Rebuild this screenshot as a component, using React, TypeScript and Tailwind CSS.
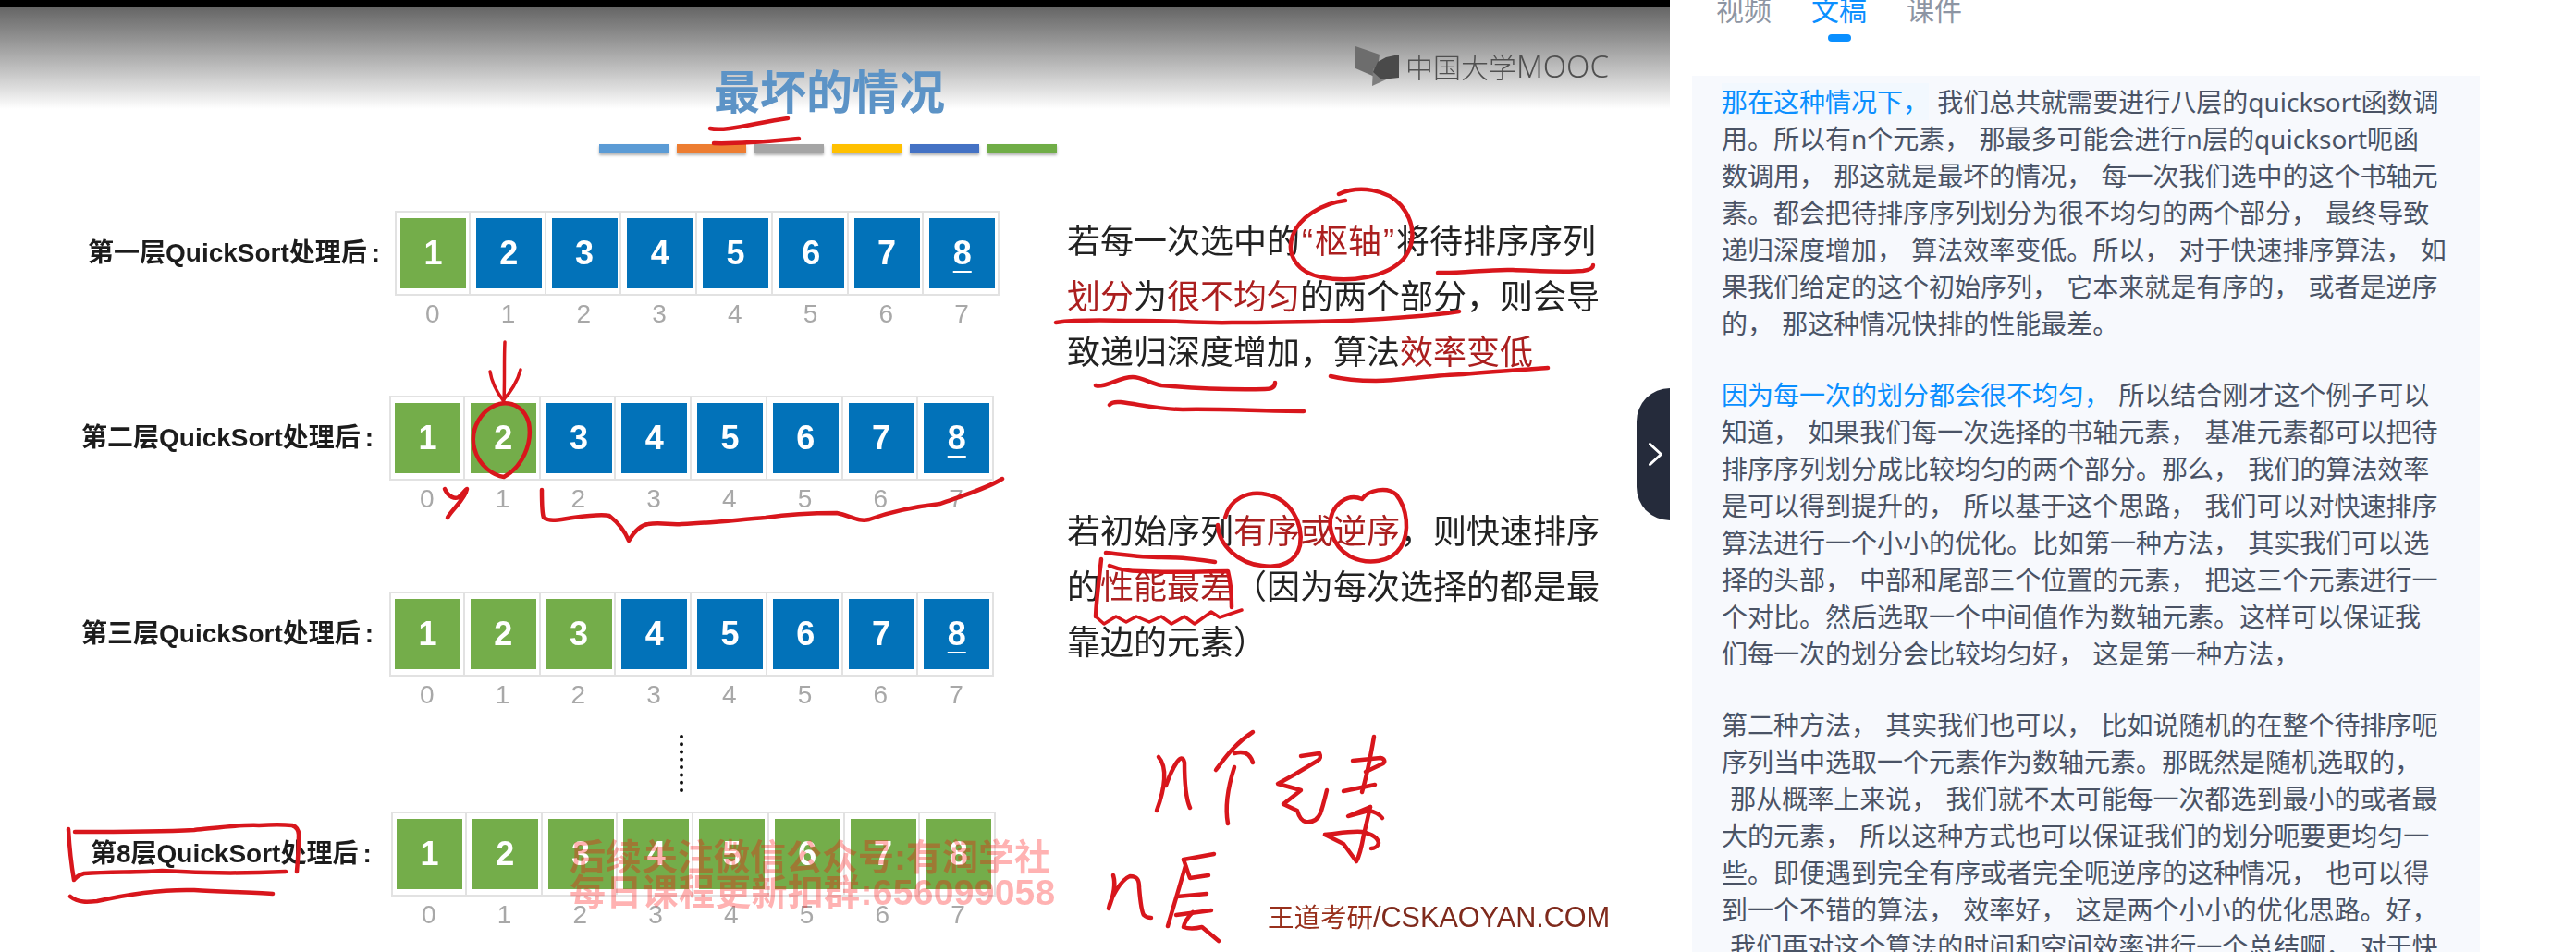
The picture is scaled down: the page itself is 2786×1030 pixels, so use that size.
import React from "react";

const COMMA = "\uFF0C";
const fw = (s: string) => s.replace(/,/g, COMMA);

const Cell = ({ n, green, mark }: { n: number; green: boolean; mark: boolean }) => (
  <div className="w-[81.75px] h-[92px] border-y-2 border-r-2 border-[#e2e2e2] pl-[6px] pr-[2.75px] py-[6px]">
    <div
      className={
        "h-full flex items-center justify-center text-white font-bold text-[36px] " +
        (green ? "bg-[#74ad4a]" : "bg-[#0272b9]")
      }
    >
      <span className={mark ? "underline decoration-2 underline-offset-[7px]" : ""}>{n}</span>
    </div>
  </div>
);

const Row = ({
  label,
  greens,
  rowClass,
  labelClass,
}: {
  label: string;
  greens: number;
  rowClass: string;
  labelClass: string;
}) => (
  <div className={"flex items-start " + rowClass}>
    <div className={"h-[92px] flex items-center text-[28px] font-bold text-[#1c1c1c] whitespace-nowrap " + labelClass}>
      {label}
      <span className="pl-[5px]">:</span>
    </div>
    <div className="w-[654px]">
      <div className="flex shadow-[inset_2px_0_0_#e2e2e2]">
        {[1, 2, 3, 4, 5, 6, 7, 8].map((n) => (
          <Cell key={n} n={n} green={n <= greens} mark={n === 8 && greens < 8} />
        ))}
      </div>
      <div className="flex h-[40px] text-[28px] leading-[40px] text-[#a8a8a8]">
        {[0, 1, 2, 3, 4, 5, 6, 7].map((n) => (
          <div key={n} className="w-[81.75px] text-center">
            {n}
          </div>
        ))}
      </div>
    </div>
  </div>
);

const Red = ({ children }: { children: React.ReactNode }) => <span className="text-[#ab1f1f]">{children}</span>;

const Ink = () => (
  <svg
    className="absolute inset-0 pointer-events-none"
    width="1806"
    height="1030"
    viewBox="0 0 1806 1030"
    fill="none"
    stroke="#d8161c"
    strokeWidth="4.5"
    strokeLinecap="round"
    strokeLinejoin="round"
  >
    {/* title */}
    <path d="M768 139C785 143 820 132 852 128" />
    <path d="M772 155C800 156 830 153 864 150" />
    {/* arrow and circle on 2 */}
    <path d="M546 370C545 390 546 415 545 433" strokeWidth="3.5" />
    <path d="M530 402C532 415 538 425 544 433C552 425 560 412 563 400" strokeWidth="3.5" />
    <path d="M545 436C520 440 508 465 513 485C518 505 535 515 545 516C565 505 576 480 572 458C568 442 555 434 540 437" />
    {/* y mark */}
    <path d="M481 529C485 538 492 540 496 538C500 535 503 530 505 529C503 540 490 550 484 560" />
    {/* brace */}
    <path d="M586 530C586 545 586 555 588 560C595 565 605 562 620 560C635 558 650 556 659 558C668 565 676 575 680 585C686 575 692 568 701 567C715 565 725 568 737 567C770 566 800 562 828 560C855 556 885 555 905 555C920 558 928 565 940 562C965 553 990 548 1017 545C1045 535 1068 528 1084 518" />
    {/* box around row 8 */}
    <path d="M74 897C75 915 77 935 80 952" />
    <path d="M81 900C120 900 170 900 210 898C240 895 262 892 280 893C295 892 306 892 316 893C322 895 323 900 323 903C323 920 322 932 321 943" />
    <path d="M81 951C84 947 87 946 91 945C120 943 150 944 175 942C220 945 265 945 309 943" />
    <path d="M76 970C85 977 95 976 105 975C140 967 175 962 210 963C240 965 270 965 295 967" />
    {/* para 1 */}
    <path d="M1455 217C1430 220 1405 235 1398 255C1391 275 1402 295 1430 300C1460 306 1500 300 1518 280C1532 262 1530 240 1515 222C1500 205 1470 200 1448 210" />
    <path d="M1555 295C1580 296 1610 291 1636 292C1665 293 1690 295 1712 293C1719 292 1723 290 1723 287" />
    <path d="M1142 349C1170 345 1200 347 1225 347C1260 346 1295 350 1332 349C1375 349 1420 348 1457 347C1500 345 1545 342 1578 337" />
    <path d="M1439 407C1455 411 1470 412 1488 412C1520 411 1550 406 1582 405C1615 402 1645 400 1674 398" />
    <path d="M1185 417C1195 420 1210 408 1225 408C1235 408 1245 415 1256 417C1290 420 1330 422 1368 421C1376 421 1379 418 1379 414" />
    <path d="M1200 438C1203 434 1208 435 1212 435C1235 438 1255 443 1279 443C1320 442 1365 445 1410 445" />
    {/* para 2 */}
    <path d="M1325 560C1330 540 1350 530 1370 535C1395 540 1410 565 1406 590C1402 608 1385 615 1365 612C1340 610 1318 590 1317 568" />
    <path d="M1473 540C1480 530 1500 526 1510 535C1522 550 1525 575 1515 592C1505 608 1480 612 1460 602C1440 590 1432 565 1445 548C1452 540 1462 535 1473 540" />
    <path d="M1196 598C1215 600 1235 603 1256 603C1275 603 1295 605 1314 608" />
    <path d="M1191 605C1189 625 1186 645 1185 667" />
    <path d="M1200 612C1210 616 1222 618 1234 618C1265 620 1300 618 1328 618C1331 630 1332 645 1332 657" />
    <path d="M1185 667L1194 675L1207 667L1218 673L1229 667L1243 673L1256 667L1267 675L1281 667L1292 675L1310 662L1319 668L1343 660" strokeWidth="3.5" />
    {/* n 个 元 素 */}
    <path d="M1253 819C1263 830 1260 853 1251 877" />
    <path d="M1261 850C1268 830 1278 812 1281 825C1281 845 1283 865 1287 874" />
    <path d="M1355 792C1335 805 1325 820 1315 833" />
    <path d="M1335 815C1345 812 1352 815 1355 825" />
    <path d="M1335 830C1327 855 1325 875 1328 891" />
    <path d="M1407 818L1427 815C1429 819 1428 821 1425 823L1400 838L1382 848L1400 853L1407 855L1388 870L1403 877C1405 884 1408 888 1412 889C1420 890 1425 887 1428 880C1431 872 1433 863 1435 855" />
    <path d="M1486 797C1482 820 1478 840 1473 857" />
    <path d="M1463 823L1493 820C1498 821 1498 824 1496 826L1477 835" />
    <path d="M1453 856L1487 849" />
    <path d="M1482 873L1458 883L1480 877C1486 878 1492 881 1495 885" />
    <path d="M1433 903C1445 902 1460 899 1473 900C1482 902 1490 905 1491 912C1490 916 1486 918 1483 918" />
    <path d="M1433 903L1453 913L1467 932C1471 925 1473 914 1475 903L1482 873" />
    {/* n 层 */}
    <path d="M1204 947C1208 960 1202 975 1199 983C1201 972 1212 952 1222 948C1230 948 1232 952 1232 960C1233 972 1234 985 1237 990C1239 992 1242 993 1245 993" />
    <path d="M1280 930L1313 924" />
    <path d="M1280 930C1283 938 1285 945 1287 950L1307 947" />
    <path d="M1282 937C1277 955 1268 985 1263 1002" />
    <path d="M1273 970L1305 967" />
    <path d="M1272 990L1310 985" />
    <path d="M1290 987C1285 992 1281 998 1280 1003C1288 1006 1296 1004 1300 1003L1318 1018" />
  </svg>
);

export default function App() {
  const stack = "font-['Liberation_Sans','Noto_Sans_CJK_SC',sans-serif]";
  const para1 = [
    "那在这种情况下,",
    " 我们总共就需要进行八层的quicksort函数调",
    "用。所以有n个元素, 那最多可能会进行n层的quicksort呃函",
    "数调用, 那这就是最坏的情况, 每一次我们选中的这个书轴元",
    "素。都会把待排序序列划分为很不均匀的两个部分, 最终导致",
    "递归深度增加, 算法效率变低。所以, 对于快速排序算法, 如",
    "果我们给定的这个初始序列, 它本来就是有序的, 或者是逆序",
    "的, 那这种情况快排的性能最差。",
  ].map(fw);
  const para2 = [
    " 所以结合刚才这个例子可以",
    "知道, 如果我们每一次选择的书轴元素, 基准元素都可以把待",
    "排序序列划分成比较均匀的两个部分。那么, 我们的算法效率",
    "是可以得到提升的, 所以基于这个思路, 我们可以对快速排序",
    "算法进行一个小小的优化。比如第一种方法, 其实我们可以选",
    "择的头部, 中部和尾部三个位置的元素, 把这三个元素进行一",
    "个对比。然后选取一个中间值作为数轴元素。这样可以保证我",
    "们每一次的划分会比较均匀好, 这是第一种方法,",
  ].map(fw);
  const para3 = [
    "第二种方法, 其实我们也可以, 比如说随机的在整个待排序呃",
    "序列当中选取一个元素作为数轴元素。那既然是随机选取的,",
    " 那从概率上来说, 我们就不太可能每一次都选到最小的或者最",
    "大的元素, 所以这种方式也可以保证我们的划分呃要更均匀一",
    "些。即便遇到完全有序或者完全呃逆序的这种情况, 也可以得",
    "到一个不错的算法, 效率好, 这是两个小小的优化思路。好,",
    " 我们再对这个算法的时间和空间效率进行一个总结啊, 对于快",
  ].map(fw);
  return (
    <div className={"flex w-[2786px] h-[1030px] overflow-hidden bg-white " + stack}>
      {/* video */}
      <div className="relative w-[1806px] h-full shrink-0 bg-white overflow-hidden">
        <div className="h-[8px] bg-black" />
        <div className="relative h-[1022px] blur-[0.6px]">
          <div className="absolute left-0 right-0 top-0 h-[110px] bg-gradient-to-b from-[#666666] to-white" />
          <div className="relative flex">
            {/* left column */}
            <div className="w-[1154px] shrink-0">
              <div className="mt-[63px] pl-[772px] h-[60px] text-[50px] leading-[60px] font-bold text-[#5c93c6] whitespace-nowrap">
                最坏的情况
              </div>
              <div className="mt-[25px] pl-[648px] flex gap-[9px]">
                {["bg-[#5b9bd5]", "bg-[#ed7d31]", "bg-[#a5a5a5]", "bg-[#ffc000]", "bg-[#4472c4]", "bg-[#70ad47]"].map((c) => (
                  <div key={c} className={"w-[75px] h-[10px] shadow-[0_2px_3px_rgba(0,0,0,0.3)] " + c} />
                ))}
              </div>
              <div className="mt-[62px]">
                <Row label="第一层QuickSort处理后" greens={1} rowClass="pl-[95px]" labelClass="w-[332px]" />
              </div>
              <div className="mt-[68px]">
                <Row label="第二层QuickSort处理后" greens={2} rowClass="pl-[88px]" labelClass="w-[333px]" />
              </div>
              <div className="mt-[80px]">
                <Row label="第三层QuickSort处理后" greens={3} rowClass="pl-[88px]" labelClass="w-[333px]" />
              </div>
              <div className="mt-[23px] ml-[735px] h-[62px] border-l-[4px] border-dotted border-[#111]" />
              <div className="mt-[21px]">
                <Row label="第8层QuickSort处理后" greens={8} rowClass="pl-[98px]" labelClass="w-[325px]" />
              </div>
            </div>
            {/* right column */}
            <div className="flex-1">
              <div className="mt-[42px] ml-[312px] h-[43px] flex items-center gap-[7px]">
                <svg width="47" height="43" viewBox="0 0 47 43" className="shrink-0">
                  <polygon points="0,0 26,9 23,34 0,24" fill="#6d6d6d" />
                  <polygon points="18,43 19,24 40,33" fill="#7e7e7e" />
                  <polygon points="19,28 24,17 33,12 47,9 47,34 28,36" fill="#4a4a4a" />
                </svg>
                <span className="text-[30px] text-[#505050] font-light whitespace-nowrap">
                  中国大学<span className="text-[33px] font-['Noto_Sans']">MOOC</span>
                </span>
              </div>
              <div className="mt-[139px] text-[36px] leading-[60px] text-[#222222] whitespace-nowrap">
                <div>
                  若每一次选中的<Red><span className="px-[2px]">“</span>枢轴<span className="px-[2px]">”</span></Red>将待排序序列
                </div>
                <div>
                  <Red>划分</Red>为<Red>很不均匀</Red>的两个部分{COMMA}则会导
                </div>
                <div>
                  致递归深度增加{COMMA}算法<Red>效率变低</Red>
                </div>
              </div>
              <div className="mt-[134px] text-[36px] leading-[60px] text-[#222222] whitespace-nowrap">
                <div>
                  若初始序列<Red>有序或逆序</Red>{COMMA}则快速排序
                </div>
                <div>
                  的<Red>性能最差</Red>{"\uFF08"}因为每次选择的都是最
                </div>
                <div>靠边的元素{"\uFF09"}</div>
              </div>
              <div className="mt-[248px] ml-[217px] h-[36px] leading-[36px] text-[#7f2a1c] whitespace-nowrap text-[30.6px]">
                <span className="text-[28.5px] text-[#98301c]">王道考研</span>/CSKAOYAN.COM
              </div>
            </div>
          </div>
          <div className="absolute left-[616px] top-[901px] text-[39px] leading-[38px] font-bold text-[#ff0000]/30 whitespace-nowrap">
            <div>后续关注微信公众号:有润学社</div>
            <div className="tracking-[0.3px]">每日课程更新扣群:656099058</div>
          </div>
        </div>
        <div className="absolute inset-0 blur-[0.4px] pointer-events-none">
          <Ink />
        </div>
        <button className="absolute right-0 top-[420px] w-[36px] h-[143px] rounded-l-[36px] bg-[#252b3b] flex items-center justify-center">
          <svg width="15" height="25" viewBox="0 0 15 25" fill="none" stroke="#ffffff" strokeWidth="3" strokeLinecap="round" strokeLinejoin="round" className="ml-[4px] -mt-[1px]">
            <path d="M1.5 1.5L13.5 12.5L1.5 23.5" />
          </svg>
        </button>
      </div>

      {/* side panel */}
      <div className="flex-1 font-['Noto_Sans','Noto_Sans_CJK_SC',sans-serif]">
        <div className="-mt-[9px] pl-[50px] flex gap-[43px] text-[30px] leading-[40px] text-[#8d95a3]">
          <span>视频</span>
          <div className="w-[60px] flex flex-col items-center">
            <span className="text-[#0a8fff] whitespace-nowrap">文稿</span>
            <div className="mt-[6px] w-[25px] h-[8px] rounded-full bg-[#0a8fff]" />
          </div>
          <span>课件</span>
        </div>
        <div className="mt-[37px] ml-[24px] w-[852px] h-[950px] bg-[#f7f9fd] px-[32px] pt-[8px] text-[28px] leading-[40px] text-[#4a5365] whitespace-pre [word-spacing:2px]">
          <div>
            <span className="inline-block bg-[#f2f8fe] text-[#0a8fff]">{para1[0]}</span>
            {para1[1]}
          </div>
          {para1.slice(2).map((l) => (
            <div key={l}>{l}</div>
          ))}
          <div className="mt-[37px]">
            <span className="text-[#0a8fff]">{fw("因为每一次的划分都会很不均匀,")}</span>
            {para2[0]}
          </div>
          {para2.slice(1).map((l) => (
            <div key={l}>{l}</div>
          ))}
          <div className="mt-[37px]">{para3[0]}</div>
          {para3.slice(1).map((l) => (
            <div key={l}>{l}</div>
          ))}
        </div>
      </div>
    </div>
  );
}
